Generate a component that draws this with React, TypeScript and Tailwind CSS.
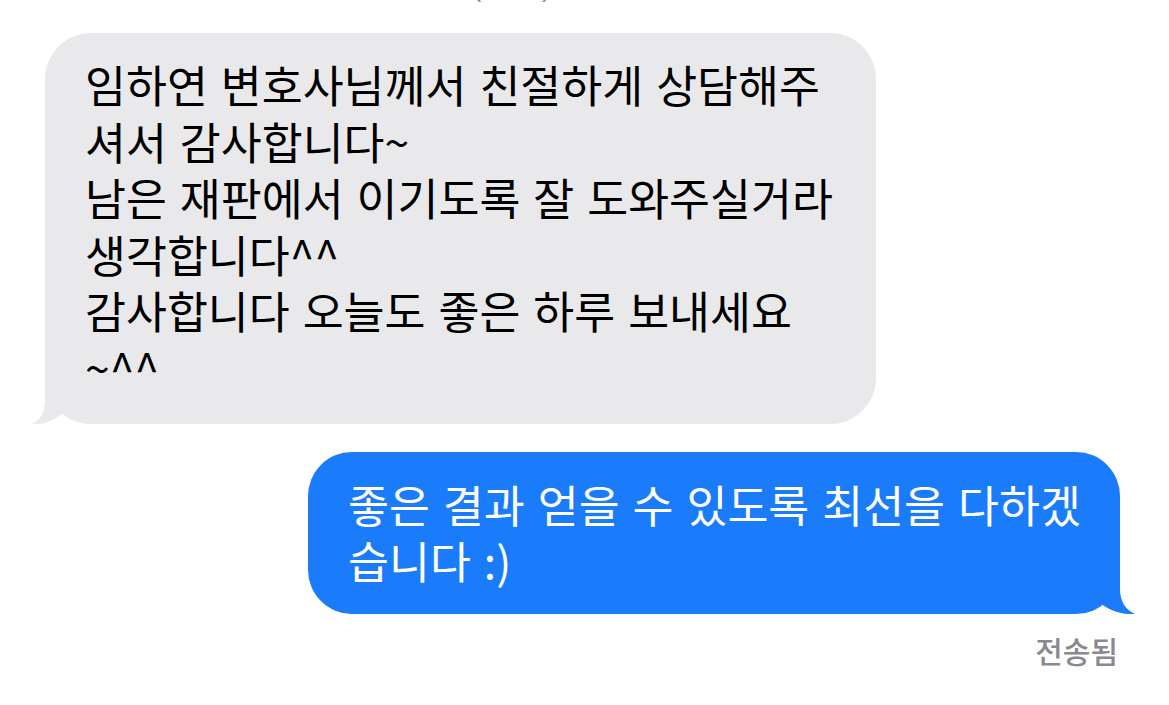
const kr = { fontFamily: '"Noto Sans CJK KR", "Noto Sans", sans-serif' };

const grayLines = [
  "임하연 변호사님께서 친절하게 상담해주",
  "셔서 감사합니다~",
  "남은 재판에서 이기도록 잘 도와주실거라",
  "생각합니다^^",
  "감사합니다 오늘도 좋은 하루 보내세요",
  "~^^",
];

const blueLines = ["좋은 결과 얻을 수 있도록 최선을 다하겠", "습니다 :)"];

function GrayTail() {
  return (
    <svg
      className="absolute left-[-13px] bottom-0 w-[56px] h-[56px]"
      viewBox="0 0 56 56"
    >
      <path
        d="M13 4 L13 31 C13 44 9 52 0 56 C13 57 23 52 32 44 L44 30 Z"
        fill="#e9e9eb"
      />
    </svg>
  );
}

function BlueTail() {
  return (
    <svg
      className="absolute right-[-15px] bottom-0 w-[56px] h-[56px]"
      viewBox="0 0 56 56"
    >
      <path
        d="M41 4 L41 31 C41 44 47 52 56 56 C43 57 31 53 21 45 L10 30 Z"
        fill="#1a7cfb"
      />
    </svg>
  );
}

function Lines({ lines }: { lines: string[] }) {
  return (
    <>
      {lines.map((l, i) => (
        <span key={i}>
          {l}
          {i < lines.length - 1 && <br />}
        </span>
      ))}
    </>
  );
}

export default function App() {
  return (
    <div className="w-[1169px] h-[705px] bg-white overflow-hidden" style={kr}>
      {/* cut off timestamp at the top */}
      <div className="h-[3px] overflow-hidden pl-[472px]">
        <div
          className="-mt-[29px] text-[28px] leading-[32px] text-[#8e8e93]"
          style={{ fontFamily: '"Liberation Sans", sans-serif' }}
        >
          (SMS)
        </div>
      </div>

      <div className="relative ml-[45px] mt-[30px] w-[831px] rounded-[46px] bg-[#e9e9eb] px-10 pt-[23px] pb-[29px]">
        <GrayTail />
        <p className="relative text-[44.5px] leading-[56.5px] text-black whitespace-nowrap [word-spacing:3px]">
          <Lines lines={grayLines} />
        </p>
      </div>

      <div className="relative ml-[308px] mt-[28px] w-[812px] rounded-[44px] bg-[#1a7cfb] px-10 pt-[24px] pb-[26px]">
        <BlueTail />
        <p className="relative text-[44.5px] leading-[56px] text-white whitespace-nowrap [word-spacing:3px]">
          <Lines lines={blueLines} />
        </p>
      </div>

      <div className="flex justify-end pr-[51px] mt-[18px]">
        <span className="text-[30px] leading-[36px] font-medium text-[#8a8a8e]">
          전송됨
        </span>
      </div>
    </div>
  );
}
